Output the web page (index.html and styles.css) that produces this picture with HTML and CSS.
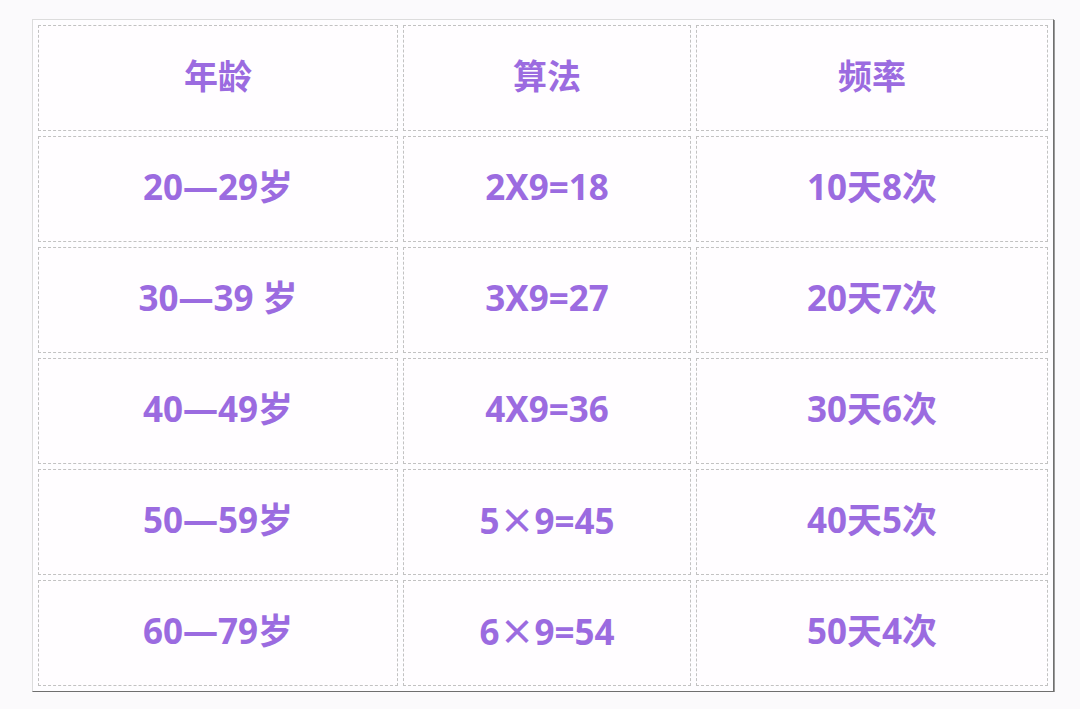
FILE: index.html
```html
<!DOCTYPE html>
<html lang="zh-CN">
<head>
<meta charset="utf-8">
<title>年龄 算法 频率</title>
<link rel="stylesheet" href="styles.css">
</head>
<body>
<div class="page">
  <table class="freq">
    <colgroup>
      <col class="c1"><col class="c2"><col class="c3">
    </colgroup>
    <tr class="head"><td>年龄</td><td>算法</td><td>频率</td></tr>
    <tr><td>20—29岁</td><td>2X9=18</td><td>10天8次</td></tr>
    <tr><td>30—39 岁</td><td>3X9=27</td><td>20天7次</td></tr>
    <tr><td>40—49岁</td><td>4X9=36</td><td>30天6次</td></tr>
    <tr><td>50—59岁</td><td>5<span class="mul">×</span>9=45</td><td>40天5次</td></tr>
    <tr><td>60—79岁</td><td>6<span class="mul">×</span>9=54</td><td>50天4次</td></tr>
  </table>
</div>
</body>
</html>
```

FILE: styles.css
```css
html, body {
  margin: 0;
  padding: 0;
  background: #fbfafc;
}
.page {
  padding: 19px 0 0 32px;
}
.freq {
  border-collapse: separate;
  border-spacing: 5px;
  width: 1022px;
  table-layout: fixed;
  background: #fefdff;
  border: 1px solid #dcdcdc;
  border-right-color: #6f6f6f;
  border-bottom-color: #6f6f6f;
  box-shadow: 1px 1px 0 #9a9a9a;
  font-family: "Noto Sans", "Noto Sans CJK SC", sans-serif;
  font-weight: 700;
  font-size: 35px;
  color: #9b6be0;
}
.c1 { width: 360px; }
.c2 { width: 288px; }
.c3 { width: 352px; }
.freq td {
  height: 106px;
  box-sizing: border-box;
  border: 1px dashed #c2c2c2;
  background: #fffdff;
  text-align: center;
  vertical-align: middle;
  padding: 0 0 6px 0;
  line-height: 1;
}
.freq tr.head td {
  padding-bottom: 6px;
  font-family: "Noto Sans CJK SC", sans-serif;
  font-size: 34px;
}
.mul {
  font-family: "Noto Sans CJK SC", sans-serif;
  font-weight: 700;
}
```
